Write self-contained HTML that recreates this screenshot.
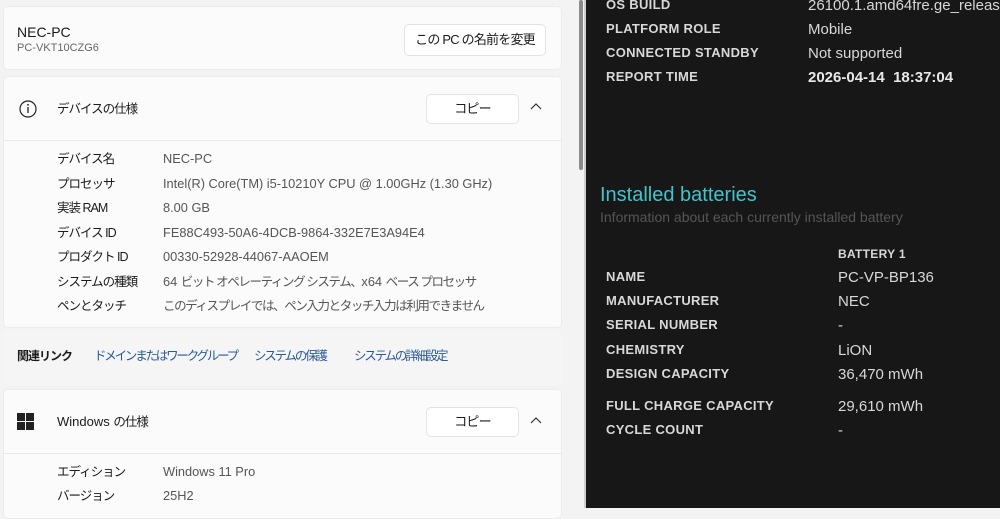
<!DOCTYPE html><html><head><meta charset="utf-8"><style>
*{margin:0;padding:0;box-sizing:border-box}
body{width:1000px;height:508px;overflow:hidden;position:relative;background:#f3f3f3;font-family:"Liberation Sans","Noto Sans CJK JP",sans-serif;color:#1a1a1a}
.a{position:absolute;white-space:nowrap;line-height:16px}
.card{position:absolute;left:3px;width:559px;background:#fbfbfb;border-radius:5px;border:1px solid #ebebeb}
.btn{position:absolute;background:#fff;border:1px solid #e3e3e3;border-radius:5px;font-size:13px;text-align:center;letter-spacing:-0.8px}
.l{font-size:12.5px;color:#1a1a1a;letter-spacing:-1px}
.v{font-size:12.8px;color:#555}
.j{font-size:12.5px;letter-spacing:-1.4px}
.lk{font-size:12.5px;color:#2a5a9a;letter-spacing:-2.2px}
.dark{position:absolute;left:586px;top:0;width:414px;height:508px;background:#171717}
.dl{position:absolute;left:20px;font-size:13px;font-weight:bold;color:#d8d8d8;letter-spacing:.3px;white-space:nowrap;line-height:16px}
.dv{position:absolute;left:222px;font-size:15px;color:#d8d8d8;white-space:nowrap;line-height:18px}
.bv{left:252px}
</style></head><body>
<div class="card" style="top:6px;height:64px"></div>
<div class="a" style="left:17px;top:24px;font-size:14px">NEC-PC</div>
<div class="a" style="left:17px;top:40px;font-size:11px;color:#666">PC-VKT10CZG6</div>
<div class="btn" style="left:404px;top:24px;width:142px;height:32px;line-height:30px">この PC の名前を変更</div>

<div class="card" style="top:76px;height:252px"></div>
<div class="a" style="left:3px;top:140px;width:559px;height:1px;background:#e8e8e8"></div>
<svg class="a" style="left:18px;top:99px" width="20" height="20"><circle cx="10" cy="10" r="8" fill="none" stroke="#222" stroke-width="1.2"/><line x1="10" y1="8" x2="10" y2="14" stroke="#222" stroke-width="1.3"/><circle cx="10" cy="5.8" r=".9" fill="#222"/></svg>
<div class="a l" style="left:57px;top:101px">デバイスの仕様</div>
<div class="btn" style="left:426px;top:94px;width:93px;height:30px;line-height:28px">コピー</div>
<svg class="a" style="left:530px;top:102px" width="12" height="10"><path d="M1 7 L6 2 L11 7" fill="none" stroke="#333" stroke-width="1.2"/></svg>
<div class="a l" style="left:57px;top:151px">デバイス名</div><div class="a v" style="left:163px;top:151px">NEC-PC</div>
<div class="a l" style="left:57px;top:176px">プロセッサ</div><div class="a v" style="left:163px;top:176px">Intel(R) Core(TM) i5-10210Y CPU @ 1.00GHz (1.30 GHz)</div>
<div class="a l" style="left:57px;top:200px">実装 RAM</div><div class="a v" style="left:163px;top:200px">8.00 GB</div>
<div class="a l" style="left:57px;top:225px">デバイス ID</div><div class="a v" style="left:163px;top:225px">FE88C493-50A6-4DCB-9864-332E7E3A94E4</div>
<div class="a l" style="left:57px;top:249px">プロダクト ID</div><div class="a v" style="left:163px;top:249px">00330-52928-44067-AAOEM</div>
<div class="a l" style="left:57px;top:274px">システムの種類</div><div class="a v" style="left:163px;top:274px">64 <span class="j">ビット オペレーティング システム、</span>x64 <span class="j">ベース プロセッサ</span></div>
<div class="a l" style="left:57px;top:298px">ペンとタッチ</div><div class="a v j" style="left:163px;top:298px">このディスプレイでは、ペン入力とタッチ入力は利用できません</div>

<div class="a" style="left:3px;top:330px;width:559px;height:55px;background:#f5f5f5;border-radius:5px"></div>
<div class="a" style="left:17px;top:348px;font-size:12px;font-weight:bold;letter-spacing:-1px">関連リンク</div>
<div class="a lk" style="left:94px;top:348px">ドメインまたはワークグループ</div>
<div class="a lk" style="left:254px;top:348px">システムの保護</div>
<div class="a lk" style="left:354px;top:348px">システムの詳細設定</div>

<div class="card" style="top:389px;height:130px"></div>
<div class="a" style="left:3px;top:453px;width:559px;height:1px;background:#e8e8e8"></div>
<svg class="a" style="left:17px;top:413px" width="17" height="17"><rect x="0" y="0" width="8" height="8" fill="#222"/><rect x="9" y="0" width="8" height="8" fill="#222"/><rect x="0" y="9" width="8" height="8" fill="#222"/><rect x="9" y="9" width="8" height="8" fill="#222"/></svg>
<div class="a" style="left:57px;top:414px;font-size:13px">Windows <span class="l">の仕様</span></div>
<div class="btn" style="left:426px;top:407px;width:93px;height:30px;line-height:28px">コピー</div>
<svg class="a" style="left:530px;top:416px" width="12" height="10"><path d="M1 7 L6 2 L11 7" fill="none" stroke="#333" stroke-width="1.2"/></svg>
<div class="a l" style="left:57px;top:464px">エディション</div><div class="a v" style="left:163px;top:464px">Windows 11 Pro</div>
<div class="a l" style="left:57px;top:488px">バージョン</div><div class="a v" style="left:163px;top:488px">25H2</div>

<div class="a" style="left:579px;top:0;width:4px;height:170px;background:#8a8a8a;border-radius:2px"></div>
<div class="a" style="left:584px;top:0;width:2px;height:508px;background:#cfcfcf"></div>

<div class="dark">
<div class="dl" style="top:-3px">OS BUILD</div><div class="dv" style="top:-3px">26100.1.amd64fre.ge_release.</div>
<div class="dl" style="top:21px">PLATFORM ROLE</div><div class="dv" style="top:21px">Mobile</div>
<div class="dl" style="top:45px">CONNECTED STANDBY</div><div class="dv" style="top:45px">Not supported</div>
<div class="dl" style="top:69px">REPORT TIME</div><div class="dv" style="top:69px;font-weight:bold;color:#e8e8e8">2026-04-14 &nbsp;18:37:04</div>
<div class="a" style="left:14px;top:184px;font-size:20px;line-height:22px;color:#3ec6cc">Installed batteries</div>
<div class="a" style="left:14px;top:209px;font-size:14px;color:#555">Information about each currently installed battery</div>
<div class="dl" style="left:252px;top:246px;font-size:12px">BATTERY 1</div>
<div class="dl" style="top:269px">NAME</div><div class="dv bv" style="top:269px">PC-VP-BP136</div>
<div class="dl" style="top:293px">MANUFACTURER</div><div class="dv bv" style="top:293px">NEC</div>
<div class="dl" style="top:317px">SERIAL NUMBER</div><div class="dv bv" style="top:317px">-</div>
<div class="dl" style="top:342px">CHEMISTRY</div><div class="dv bv" style="top:342px">LiON</div>
<div class="dl" style="top:366px">DESIGN CAPACITY</div><div class="dv bv" style="top:366px">36,470 mWh</div>
<div class="dl" style="top:398px">FULL CHARGE CAPACITY</div><div class="dv bv" style="top:398px">29,610 mWh</div>
<div class="dl" style="top:422px">CYCLE COUNT</div><div class="dv bv" style="top:422px">-</div>
</div>
</body></html>
